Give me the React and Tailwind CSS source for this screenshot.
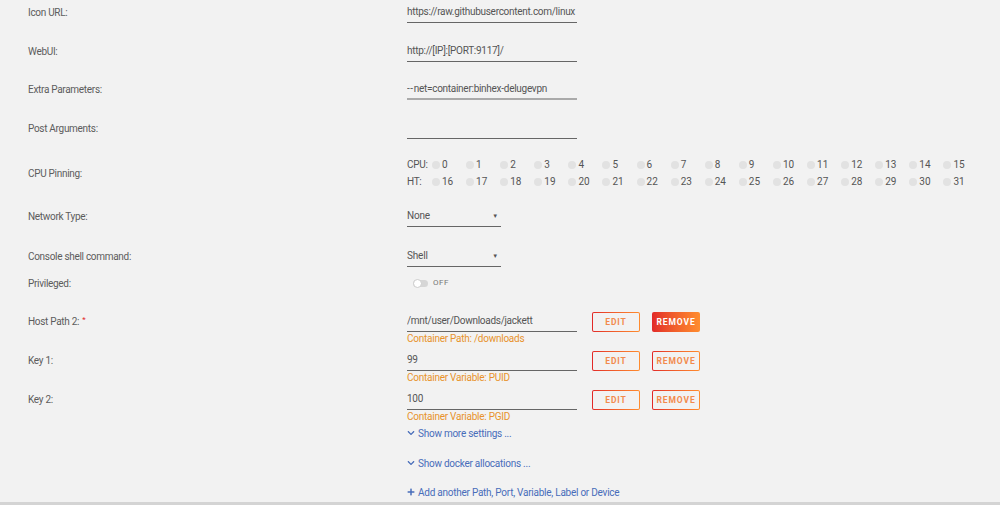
import { FaChevronDown, FaPlus } from 'react-icons/fa';

const font = { fontFamily: 'Roboto, "Liberation Sans", sans-serif' };

function Label({ children, required }) {
  return (
    <div className="w-[379px] shrink-0 text-[10px] leading-[21px] tracking-[-0.3px] text-[#5c5c5c]">
      {children}
      {required && <span className="ml-[3px] relative top-[-3px] text-[8px] text-[#e22828]">*</span>}
    </div>
  );
}

function TextBox({ value, light }) {
  return (
    <div
      className={`w-[170px] h-[21px] overflow-hidden whitespace-nowrap text-[10px] leading-[20px] tracking-[-0.28px] text-[#555] ${
        light ? 'border-b-2 border-[#aaa]' : 'border-b border-[#666]'
      }`}
    >
      {value}
    </div>
  );
}

function SelectBox({ value }) {
  return (
    <div className="w-[94px] h-[21px] flex items-center justify-between border-b border-[#666] text-[10px] leading-[20px] tracking-[-0.2px] text-[#555] pr-[1px]">
      <span>{value}</span>
      <span className="text-[6px] mr-[2px]">▼</span>
    </div>
  );
}

function Btn({ children, filled }) {
  return (
    <div className="rounded-[2px] p-px bg-gradient-to-r from-[#e22828] to-[#ff8c2f]">
      <div
        className={`w-[46px] h-[18px] rounded-[1px] flex items-center justify-center text-[8.5px] font-bold tracking-[0.9px] ${
          filled ? 'text-white' : 'bg-[#f2f2f2] text-[#f28a4c]'
        }`}
      >
        {children}
      </div>
    </div>
  );
}

function MappedRow({ label, value, note, removeFilled, required }) {
  return (
    <div className="flex h-[39px]">
      <Label required={required}>{label}</Label>
      <div>
        <div className="flex items-start">
          <TextBox value={value} />
          <div className="flex gap-[12px] ml-[15px] mt-[1px]">
            <Btn>EDIT</Btn>
            <Btn filled={removeFilled}>REMOVE</Btn>
          </div>
        </div>
        <div className="text-[10px] leading-[14px] tracking-[-0.25px] text-[#e8922c]">{note}</div>
      </div>
    </div>
  );
}

function CpuRow({ label, start }) {
  const nums = Array.from({ length: 16 }, (_, i) => start + i);
  return (
    <div className="flex items-center h-[17px] text-[10px] text-[#555]">
      <span className="w-[25px] tracking-[-0.3px]">{label}</span>
      {nums.map((n) => (
        <span key={n} className="w-[34.1px] flex items-center shrink-0">
          <span className="w-[8px] h-[8px] rounded-full bg-[#e2e2e2] mr-[2px]" />
          <span>{n}</span>
        </span>
      ))}
    </div>
  );
}

export default function App() {
  return (
    <div className="w-[1000px] h-[505px] bg-[#f2f2f2] flex flex-col overflow-hidden" style={font}>
      <div className="flex-1 pl-[28px] pt-[2px]">
        <div className="flex h-[39px]">
          <Label>Icon URL:</Label>
          <TextBox value="https://raw.githubusercontent.com/linux" />
        </div>
        <div className="flex h-[38px]">
          <Label>WebUI:</Label>
          <TextBox value="http://[IP]:[PORT:9117]/" />
        </div>
        <div className="flex h-[39px]">
          <Label>Extra Parameters:</Label>
          <TextBox
            light
            value={
              <>
                <span className="tracking-[0.6px]">--</span>net=container:binhex-delugevpn
              </>
            }
          />
        </div>
        <div className="flex h-[38px]">
          <Label>Post Arguments:</Label>
          <TextBox value="" />
        </div>
        <div className="flex h-[50px]">
          <div className="w-[379px] shrink-0 h-[34px] flex items-center text-[10px] tracking-[-0.3px] text-[#5c5c5c]">CPU Pinning:</div>
          <div>
            <CpuRow label="CPU:" start={0} />
            <CpuRow label="HT:" start={16} />
          </div>
        </div>
        <div className="flex h-[40px]">
          <Label>Network Type:</Label>
          <SelectBox value="None" />
        </div>
        <div className="flex h-[27px]">
          <Label>Console shell command:</Label>
          <SelectBox value="Shell" />
        </div>
        <div className="flex h-[38px]">
          <Label>Privileged:</Label>
          <div className="flex items-center h-[20px] gap-[5px] ml-[6px]">
            <div className="w-[15px] h-[7px] rounded-full bg-[#d6d6d6] relative">
              <div className="absolute left-0 top-[-1px] w-[9px] h-[9px] rounded-full bg-white border border-[#ccc]" />
            </div>
            <span className="text-[8px] tracking-[0.5px] text-[#777]">OFF</span>
          </div>
        </div>
        <MappedRow label="Host Path 2:" required value="/mnt/user/Downloads/jackett" note="Container Path: /downloads" removeFilled />
        <MappedRow label="Key 1:" value="99" note="Container Variable: PUID" />
        <MappedRow label="Key 2:" value="100" note="Container Variable: PGID" />
        <div className="pl-[379px] text-[10px] tracking-[-0.25px] text-[#486dba]">
          <div className="h-[12px] flex items-center gap-[3px] -mt-[1px]">
            <FaChevronDown className="w-[8px] h-[8px]" />
            <span>Show more settings ...</span>
          </div>
          <div className="h-[12px] flex items-center gap-[3px] mt-[18px]">
            <FaChevronDown className="w-[8px] h-[8px]" />
            <span>Show docker allocations ...</span>
          </div>
          <div className="h-[12px] flex items-center gap-[3px] mt-[17px]">
            <FaPlus className="w-[8px] h-[8px]" />
            <span>Add another Path, Port, Variable, Label or Device</span>
          </div>
        </div>
      </div>
      <div className="h-[3px] bg-[#d4d4d4]" />
    </div>
  );
}
